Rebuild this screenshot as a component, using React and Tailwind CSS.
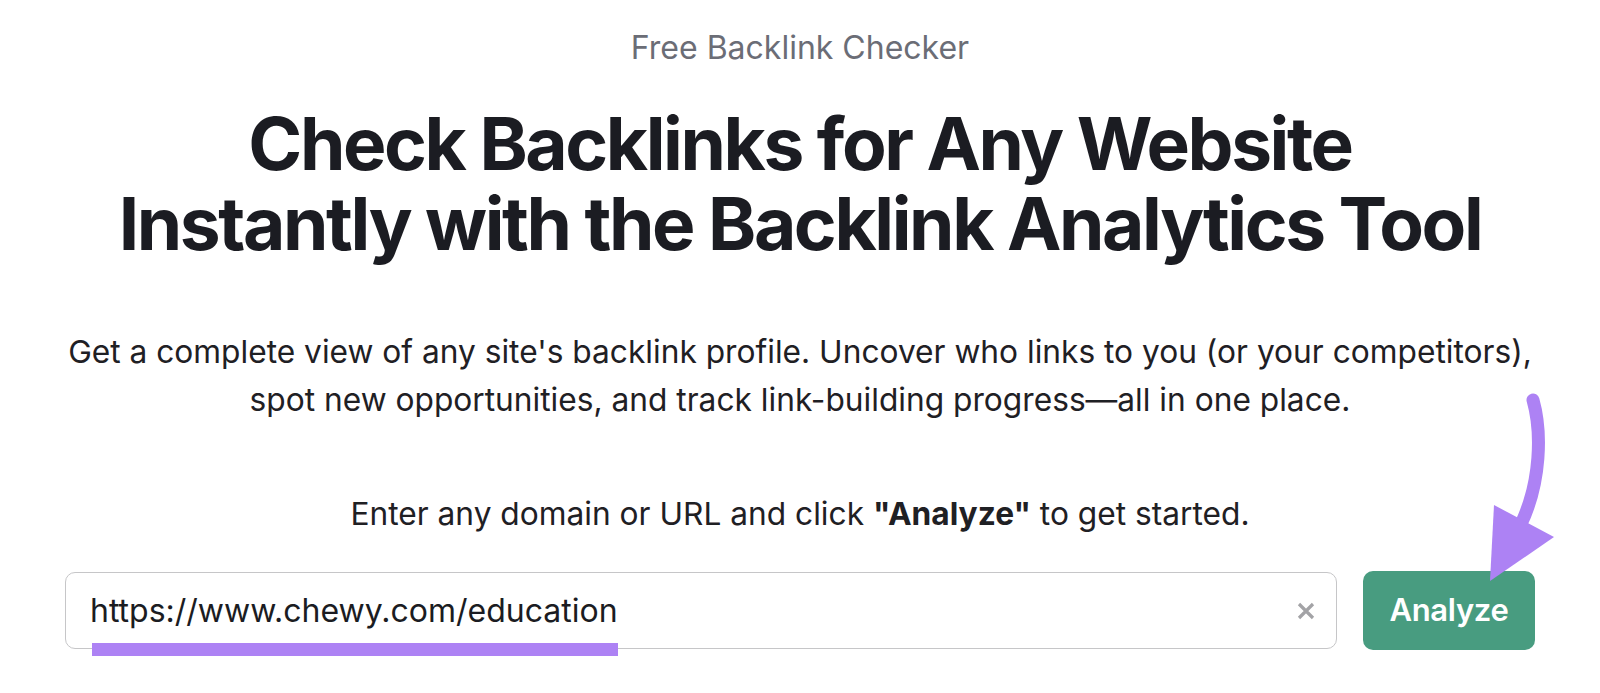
import React from "react";

export default function App() {
  return (
    <div
      className="relative w-full h-[693px] bg-white overflow-hidden"
      style={{ fontFamily: "Inter, 'Noto Sans', sans-serif" }}
    >
      <div className="mx-auto w-[1470px] flex flex-col items-center">
        <div className="pt-[30px] text-[32px] leading-[36px] text-[#6b6d76]">
          Free Backlink Checker
        </div>
        <h1 className="mt-[38px] text-center text-[73px] leading-[80px] font-bold tracking-[-0.033em] text-[#1b1c22]">
          Check Backlinks for Any Website
          <br />
          Instantly with the Backlink Analytics Tool
        </h1>
        <p className="mt-[64px] text-center text-[31.7px] leading-[48px] text-[#1f2024]">
          Get a complete view of any site's backlink profile. Uncover who links to you (or your competitors),
          <br />
          spot new opportunities, and track link-building progress—all in one place.
        </p>
        <p className="mt-[66px] text-center text-[31.7px] leading-[48px] text-[#1f2024]">
          Enter any domain or URL and click <span className="font-bold">"Analyze"</span> to get started.
        </p>
        <div className="mt-[33px] w-full h-[79px] flex items-center gap-[26px]">
          <div className="relative flex-1 h-[77px] rounded-[10px] border-[1.5px] border-[#c6c6c8] flex items-center pl-[24px] pr-[20px]">
            <span className="flex-1 text-[32px] text-[#1b1c22] leading-[38px]">
              https://www.chewy.com/education
            </span>
            <svg width="18" height="18" viewBox="0 0 18 18" className="mr-[1px]">
              <path d="M2 2 L16 16 M16 2 L2 16" stroke="#a3a3a6" strokeWidth="3.2" strokeLinecap="butt" />
            </svg>
          </div>
          <button className="w-[172px] h-[79px] rounded-[10px] bg-[#489c80] text-white text-[31px] font-semibold tracking-[-0.01em]">
            Analyze
          </button>
        </div>
      </div>

      <svg
        className="absolute top-0 left-0 pointer-events-none"
        width="1600"
        height="693"
        viewBox="0 0 1600 693"
      >
        <rect x="92" y="643" width="526" height="13" fill="#ad82f4" />
        <path
          d="M1533 400 C1542 432 1541 482 1521 524"
          stroke="#ad82f4"
          strokeWidth="13"
          fill="none"
          strokeLinecap="round"
        />
        <polygon points="1494,505 1554,537 1490,581" fill="#ad82f4" />
      </svg>
    </div>
  );
}
